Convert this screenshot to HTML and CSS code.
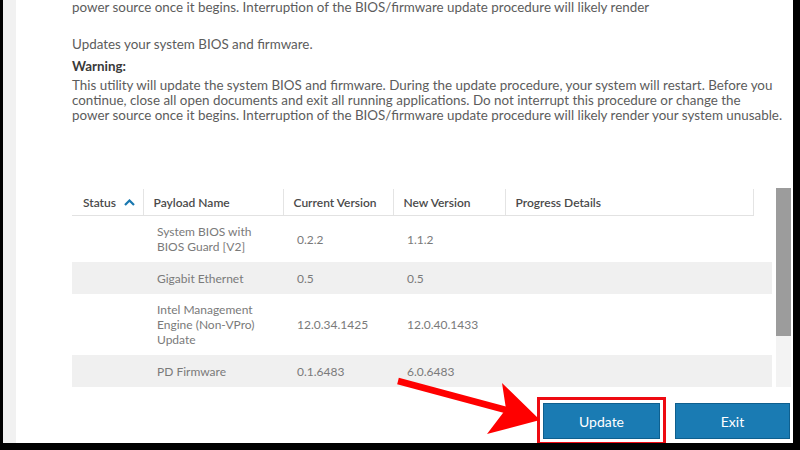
FILE: index.html
```html
<!DOCTYPE html>
<html lang="en">
<head>
    <meta charset="UTF-8">
    <meta name="viewport" content="width=device-width, initial-scale=1.0">
    <title>BIOS Update</title>
    <link rel="stylesheet" href="styles.css">
</head>
<body>
    <div class="screen">
        <div class="rail"></div>
        <div class="main">
            <div class="intro">
                <p class="cut">power source once it begins. Interruption of the BIOS/firmware update procedure will likely render</p>
                <p class="summary">Updates your system BIOS and firmware.</p>
                <p class="warn-title">Warning:</p>
                <p class="warn">This utility will update the system BIOS and firmware. During the update procedure, your system will restart. Before you continue, close all open documents and exit all running applications. Do not interrupt this procedure or change the<br>power source once it begins. Interruption of the BIOS/firmware update procedure will likely render your system unusable.</p>
            </div>

            <div class="grid-wrap">
                <table class="payloads">
                    <colgroup>
                        <col style="width:71px">
                        <col style="width:140px">
                        <col style="width:110px">
                        <col style="width:112px">
                        <col style="width:248px">
                        <col style="width:19px">
                    </colgroup>
                    <thead>
                        <tr>
                            <th class="first">Status
                                <svg class="sort" width="11" height="7" viewBox="0 0 11 7"><path d="M1 6 L5.5 1.5 L10 6" fill="none" stroke="#1a78b0" stroke-width="2.2"/></svg>
                            </th>
                            <th>Payload Name</th>
                            <th>Current Version</th>
                            <th>New Version</th>
                            <th class="last">Progress Details</th>
                            <th class="gutter"></th>
                        </tr>
                    </thead>
                    <tbody>
                        <tr>
                            <td></td>
                            <td>System BIOS with BIOS Guard [V2]</td>
                            <td>0.2.2</td>
                            <td>1.1.2</td>
                            <td></td>
                            <td></td>
                        </tr>
                        <tr class="alt">
                            <td></td>
                            <td>Gigabit Ethernet</td>
                            <td>0.5</td>
                            <td>0.5</td>
                            <td></td>
                            <td></td>
                        </tr>
                        <tr>
                            <td></td>
                            <td>Intel Management Engine (Non-VPro) Update</td>
                            <td>12.0.34.1425</td>
                            <td>12.0.40.1433</td>
                            <td></td>
                            <td></td>
                        </tr>
                        <tr class="alt">
                            <td></td>
                            <td>PD Firmware</td>
                            <td>0.1.6483</td>
                            <td>6.0.6483</td>
                            <td></td>
                            <td></td>
                        </tr>
                    </tbody>
                </table>
                <div class="scrollbar"><div class="thumb"></div></div>
            </div>

            <div class="actions">
                <button class="btn highlighted">Update</button>
                <button class="btn">Exit</button>
            </div>
        </div>

        <!-- red annotation arrow pointing at the Update button -->
        <svg class="annotation" width="800" height="450" viewBox="0 0 800 450">
            <line x1="398" y1="381" x2="506" y2="410" stroke="#f00" stroke-width="6.5"/>
            <polygon points="540,420 502,383 506,409 487,434" fill="#f00"/>
        </svg>
    </div>
</body>
</html>
```

FILE: styles.css
```css
body {
    margin: 0;
    background: #000;
    font-family: Lato, "Open Sans", sans-serif;
}
.screen {
    position: relative;
    display: flex;
    width: 790px;
    height: 443px;
    margin-left: 3px;
    background: #fff;
    overflow: hidden;
}
.rail {
    width: 13px;
    flex-shrink: 0;
    background: #f1f1f1;
}
.main {
    flex: 1;
    padding: 0 1px 0 56px;
    display: flex;
    flex-direction: column;
}
.intro {
    width: 720px;
}
.intro p {
    margin: 0;
    font-size: 13.4px;
    line-height: 15px;
    color: #5c5c5c;
}
.intro .cut {
    white-space: nowrap;
}
.intro .summary {
    margin-top: 22px;
}
.intro .warn-title {
    margin-top: 7px;
    margin-bottom: 4px;
    font-weight: bold;
    color: #3a3a3a;
}
.grid-wrap {
    display: flex;
    margin-top: 66px;
}
.payloads {
    width: 700px;
    table-layout: fixed;
    border-collapse: collapse;
    font-size: 12px;
}
.payloads th {
    text-align: left;
    font-weight: 600;
    color: #4a4a4a;
    padding: 3px 10px 2px;
    height: 21px;
    border-bottom: 1px solid #e2e2e2;
    border-left: 1px solid #e4e4e4;
    white-space: nowrap;
}
.payloads th.first {
    border-left: none;
    padding-left: 11px;
}
.payloads th.last {
    border-right: 1px solid #e4e4e4;
}
.payloads th.gutter {
    border: none;
}
.sort {
    margin-left: 5px;
    vertical-align: 1px;
}
.payloads td {
    padding: 8px 10px 8px 14px;
    line-height: 15px;
    color: #7a7a7a;
    vertical-align: middle;
}
.payloads tr.alt td {
    background: #f0f0f0;
    padding-top: 9px;
    padding-bottom: 8px;
}
.scrollbar {
    width: 15px;
    margin-left: 4px;
    margin-top: -1px;
    height: 199px;
    background: #f3f3f3;
}
.thumb {
    height: 148px;
    background: #9c9c9c;
}
.actions {
    display: flex;
    justify-content: flex-end;
    gap: 15px;
    margin-top: 16px;
    padding-right: 2px;
}
.btn {
    width: 115px;
    height: 36px;
    border: 1px solid #0e5f8e;
    background: #1a7bb3;
    color: #fff;
    font-family: Lato, "Open Sans", sans-serif;
    font-size: 14px;
}
.btn.highlighted {
    width: 117px;
    outline: 3px solid #ee0a12;
    outline-offset: 3px;
}
.annotation {
    position: absolute;
    left: -3px;
    top: 0;
    pointer-events: none;
}
```
